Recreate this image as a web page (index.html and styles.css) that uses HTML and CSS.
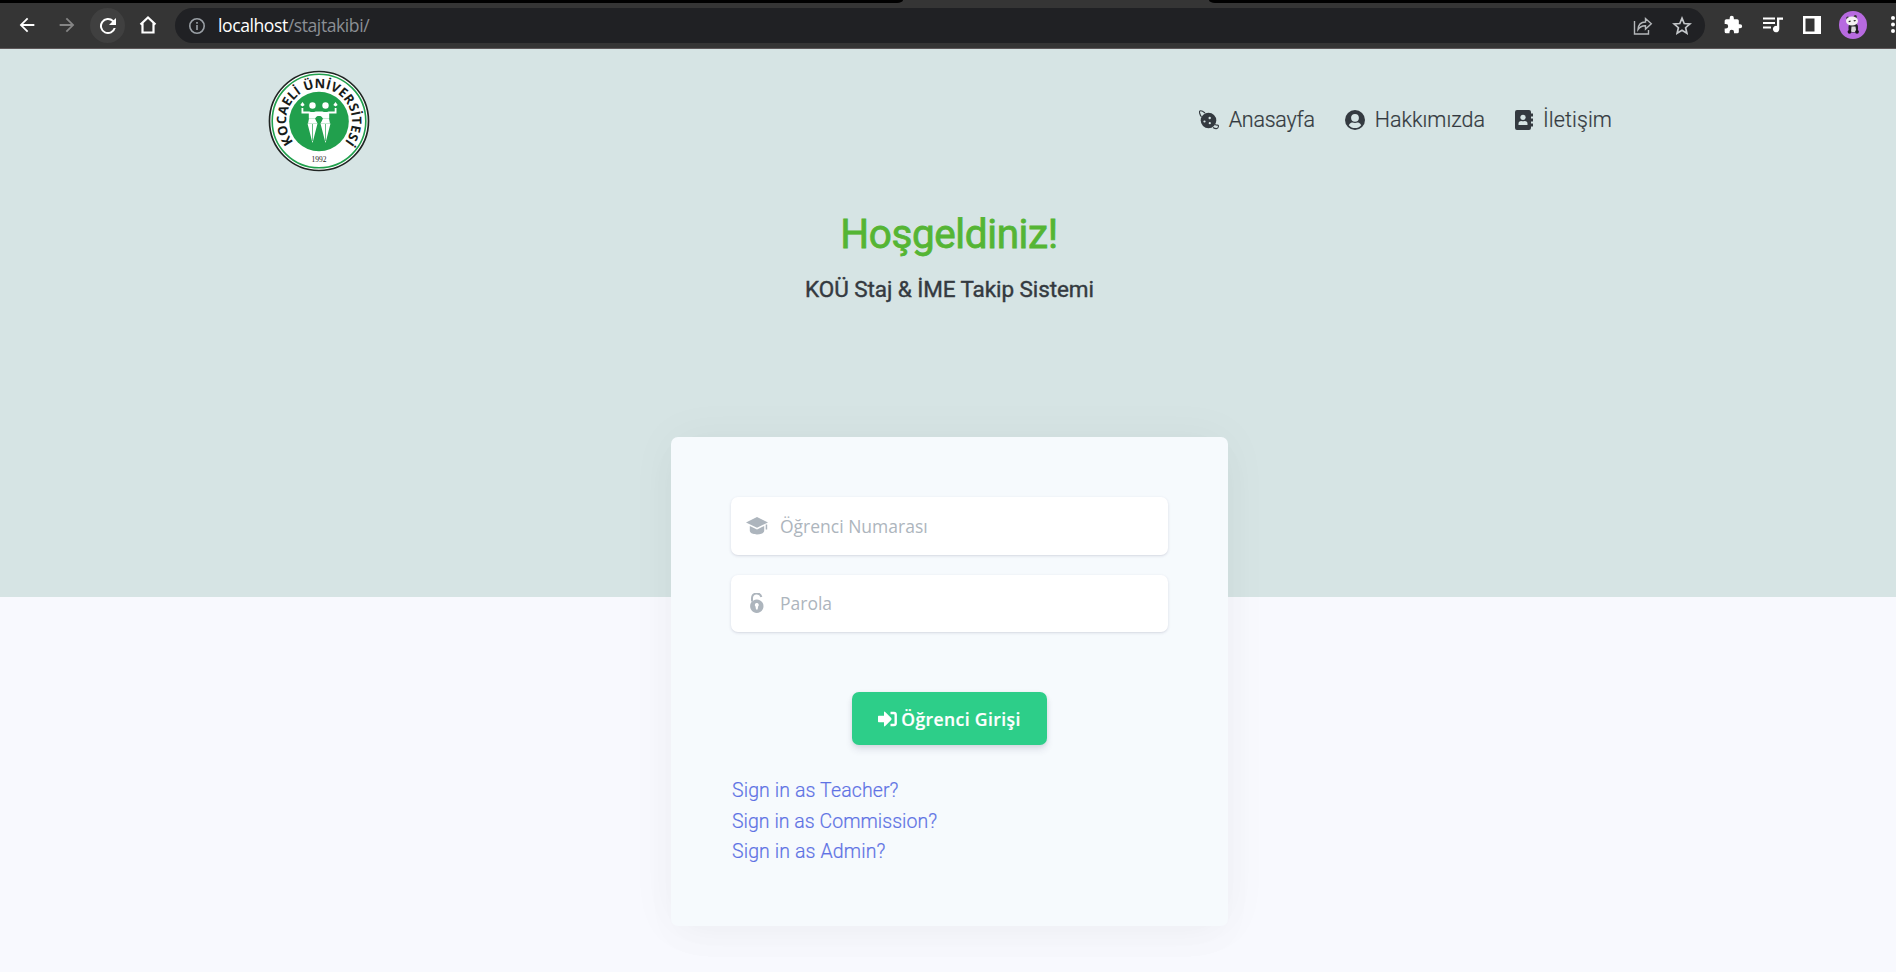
FILE: index.html
```html
<!DOCTYPE html>
<html lang="tr">
<head>
<meta charset="utf-8">
<title>Staj Takibi</title>
<link rel="stylesheet" href="styles.css">
</head>
<body>
<header class="browser">
  <div class="tabstrip"><i class="tab-left"></i><i class="tab-right"></i></div>
  <div class="toolbar">
    <svg class="tool back" viewBox="0 0 24 24"><path d="M20 11H7.8l5.6-5.6L12 4l-8 8 8 8 1.4-1.4L7.8 13H20z"/></svg>
    <svg class="tool forward" viewBox="0 0 24 24"><path d="M4 11h12.2l-5.6-5.6L12 4l8 8-8 8-1.4-1.4 5.6-5.6H4z"/></svg>
    <span class="reload"><svg class="tool" viewBox="0 0 24 24"><path d="M17.65 6.35A8 8 0 1 0 19.73 14h-2.08A6 6 0 1 1 16.2 7.8L13 11h7V4z"/></svg></span>
    <svg class="tool home" viewBox="0 0 24 24"><path d="M4.500 11.500 12 4.500l7.500 7M6.500 10v9.500h11V10" fill="none" stroke="#fff" stroke-width="2.200"/></svg>
    <div class="address">
      <svg class="info" viewBox="0 0 18 18"><circle cx="9" cy="9" r="7.200" fill="none" stroke="#9aa0a6" stroke-width="1.600"/><path d="M8.200 8h1.600v5H8.200zM8.200 5h1.600v1.700H8.200z" fill="#9aa0a6"/></svg>
      <span class="url"><b>localhost</b>/stajtakibi/</span>
      <svg class="share" viewBox="0 0 20 20" fill="none" stroke="#b5b8bb" stroke-width="1.400"><path d="M1.500 5v13h14v-4M5 13.500C5.300 8.500 8 6 12.500 6V2.500l5.800 5.300-5.800 5.300V9.700C9 9.500 7 10.500 5 13.500z"/></svg>
      <svg class="star" viewBox="0 0 20 20" fill="none" stroke="#c4c7ca" stroke-width="1.700"><path d="m10 2.200 2.200 5.300 5.700.5-4.300 3.700 1.300 5.600-4.900-3-4.900 3 1.300-5.600L2.100 8l5.700-.5z"/></svg>
    </div>
    <svg class="ext puzzle" viewBox="0 0 24 24"><path d="M20.500 11H19V7a2 2 0 0 0-2-2h-4V3.500a2.500 2.500 0 0 0-5 0V5H4a2 2 0 0 0-2 2v3.800h1.500a2.700 2.700 0 0 1 0 5.400H2V20a2 2 0 0 0 2 2h3.800v-1.500a2.700 2.700 0 0 1 5.400 0V22H17a2 2 0 0 0 2-2v-4h1.500a2.500 2.500 0 0 0 0-5z"/></svg>
    <svg class="ext music" viewBox="0 0 20 18"><path d="M0 1.500h12v2H0zM0 6h12v2H0zM0 10.500h8v2H0zM14 1.500h6v2.200h-3.700v9.300a3.200 3.200 0 1 1-2.300-3z"/></svg>
    <svg class="ext panel" viewBox="0 0 18 18"><path d="M0 0h18v18H0zM2.500 2.500v13h9v-13z" fill-rule="evenodd"/></svg>
    <svg class="avatar" viewBox="0 0 28 28"><circle cx="14" cy="14" r="14" fill="#b76ae0"/><rect x="9.500" y="12.500" width="9.500" height="9" rx="3.500" fill="#222226"/><path d="M12.500 15.500h4l.8 5.500h-5.300z" fill="#d9d7db"/><circle cx="8.800" cy="7" r="1.600" fill="#333"/><circle cx="16.300" cy="5.700" r="1.600" fill="#333"/><ellipse cx="13" cy="10" rx="6" ry="4.500" fill="#f4f1f2"/><path d="m9.500 10 2-.4.200 1.200-1.800.5zM14.500 9.300l2-.4.300 1.200-1.800.4z" fill="#222"/><circle cx="10.500" cy="20.800" r="1.900" fill="#161618"/><circle cx="18" cy="20.800" r="1.900" fill="#161618"/></svg>
    <svg class="more" viewBox="0 0 4 18"><circle cx="2" cy="2" r="2"/><circle cx="2" cy="8.500" r="2"/><circle cx="2" cy="15" r="2"/></svg>
  </div>
</header>
<main class="page">
  <section class="hero">
    <div class="navbar">
      <svg class="logo" viewBox="-51 -51 102 102">
        <circle r="49.500" fill="#fff" stroke="#202422" stroke-width="1.700"/>
        <circle r="46.800" fill="none" stroke="#21a04d" stroke-width="1.600"/>
        <circle cy=".5" r="29.800" fill="#21a04d"/>
        <path id="ring" d="M-25.600 21A33 33 0 1 1 26.400 20" fill="none"/>
        <text class="logo-name"><textPath href="#ring" textLength="148">KOCAELİ ÜNİVERSİTESİ</textPath></text>
        <text class="logo-year" y="40.500" text-anchor="middle" textLength="15">1992</text>
        <g fill="#fff">
          <circle cx="-6.500" cy="-15.500" r="3.200"/><circle cx="6.500" cy="-15.500" r="3.200"/>
          <path d="M-17.500-13h1.800v3.400h6q3.200 1.200 6.400 0h6.600q3.200 1.200 6.400 0h6V-13h1.800v5.500H10.200v5H4Q3-5 0-5T-4-2.500h-6.200v-5h-7.300z"/>
          <path d="M-11.500 2.500h10L-6.500 22zM1.500 2.500h10L6.500 22z"/>
          <path d="M-16.500-19l2.200 3-2.200 1.600-2.200-1.600zM16.500-19l2.200 3-2.200 1.600-2.200-1.600z"/>
          <path d="M-4-2.500h-6l-1 5h9.500zM4-2.500h6l1 5H1.500z"/>
        </g>
        <circle cy="-2" r="3" fill="#21a04d"/>
        <circle cy="-2.300" r="2.500" fill="#21a04d"/>
        <path d="M-6.500 3v17M6.500 3v17" stroke="#21a04d" stroke-width=".7"/>
      </svg>
      <nav class="menu">
        <a class="m1"><svg viewBox="0 0 20 20"><circle cx="9.500" cy="10.500" r="7.800"/><path d="M2.500 7C.8 4.500-.2 1.500 1 .9 2 .4 4.200 1.500 6 3M16 14.500c2.500 1.500 4-.5 3.300 2.500-.4 2.200-3 2-5.300.5" fill="none" stroke="#343a40" stroke-width="1.100"/><g fill="#d6e4e4"><circle cx="10.700" cy="8" r="1.200"/><circle cx="5.500" cy="11.500" r="1.100"/><circle cx="10.800" cy="13.200" r="1.100"/></g></svg><span>Anasayfa</span></a>
        <a class="m2"><svg viewBox="0 0 20 20"><circle cx="10" cy="10" r="10"/><circle cx="10" cy="7.800" r="3.900" fill="#d6e4e4"/><path d="M3.800 15.200C5 12.800 6.500 12.600 7.500 12.600q2.500.9 5 0c1 0 2.500.2 3.700 2.600C13 19 7 19 3.800 15.200z" fill="#d6e4e4"/></svg><span>Hakkımızda</span></a>
        <a class="m3"><svg viewBox="0 0 18 20"><path d="M2 0h12a2 2 0 0 1 2 2v16a2 2 0 0 1-2 2H2a2 2 0 0 1-2-2V2a2 2 0 0 1 2-2zM16 3.500h2v3h-2zM16 8.500h2v3h-2zM16 13.500h2v3h-2z"/><circle cx="8" cy="7.300" r="2.600" fill="#d6e4e4"/><path d="M3.500 15v-1.200q0-2.800 2.800-2.800q1.700.7 3.400 0q2.800 0 2.800 2.800V15z" fill="#d6e4e4"/></svg><span>İletişim</span></a>
      </nav>
    </div>
    <h1 class="welcome"><span>Hoşgeldiniz!</span></h1>
    <p class="subtitle"><span>KOÜ Staj &amp; İME Takip Sistemi</span></p>
  </section>
  <form class="card">
    <label class="field first"><svg viewBox="0 0 22 18"><path d="M11 0 22 5.400 11 10.800 0 5.400z"/><path d="M3.800 9 11 12.400 18.200 9v4.800c0 4.800-14.400 4.800-14.400 0zM19.700 7.500h1.500v5h-1.500z"/></svg><span>Öğrenci Numarası</span></label>
    <label class="field second"><svg viewBox="0 0 22 20"><path d="M6 8.500V5a4.800 4.800 0 0 1 9.400-1" fill="none" stroke="#adb5bd" stroke-width="2"/><path d="M10.800 6.500a6.700 6.700 0 1 0 .01 0z"/><path d="M10.800 10a2 2 0 0 1 1.300 3.500l-.5 3h-1.600l-.5-3A2 2 0 0 1 10.800 10z" fill="#fff"/></svg><span>Parola</span></label>
    <button class="submit" type="button"><svg viewBox="0 0 19 16"><path d="M0 5.500q0-.7.700-.7H6V1.500q0-1.500 1.200-.6l6 6.200q.8.900 0 1.800l-6 6.200Q6 16 6 14.500v-3.300H.7q-.7 0-.7-.7z"/><path d="M12.500 2H16q1.700 0 1.700 1.700v8.600Q17.700 14 16 14h-3.500" fill="none" stroke="#fff" stroke-width="2.400"/></svg><span>Öğrenci Girişi</span></button>
    <div class="links">
      <a class="l1">Sign in as Teacher?</a>
      <a class="l2">Sign in as Commission?</a>
      <a class="l3">Sign in as Admin?</a>
    </div>
  </form>
</main>
</body>
</html>
```

FILE: styles.css
```css
* { box-sizing: border-box; }
body { margin: 0; height: 972px; overflow: hidden; background: #f8f9fe; font-family: Roboto, "Open Sans", sans-serif; }
svg { display: block; flex: none; }
.browser { height: 49px; background: #353535; border-bottom: 1px solid #5d5759; overflow: hidden; }
.tabstrip { height: 3px; display: flex; justify-content: space-between; }
.tab-left { width: 903px; background: #000; border-bottom-right-radius: 6px 3px; }
.tab-right { width: 687px; background: #000; border-bottom-left-radius: 6px 3px; }
.toolbar { height: 45px; display: flex; align-items: center; padding-left: 16px; }
.tool { width: 24px; height: 24px; fill: #fff; margin-right: 14px; }
.back { width: 22px; margin-right: 18px; }
.forward { width: 22px; fill: #858585; margin-right: 12px; }
.reload { width: 35px; height: 35px; border-radius: 50%; background: #404040; display: flex; align-items: center; justify-content: center; margin-right: 11px; }
.reload .tool { margin: 0; }
.home { margin-right: 15px; }
.toolbar > .tool, .ext, .avatar, .more { margin-bottom: 1px; }
.address { width: 1530px; height: 35px; border-radius: 18px; background: #202124; display: flex; align-items: center; padding: 0 13px; flex: none; }
.info { width: 18px; height: 18px; margin-right: 12px; }
.url { font: 17.600px "Open Sans", sans-serif; letter-spacing: -.44px; color: #8b8f94; white-space: nowrap; flex: 1; padding-bottom: 1px; }
.url b { font-weight: 400; color: #fff; }
.share { width: 20px; height: 20px; margin-right: 19px; }
.star { width: 20px; height: 20px; }
.ext { fill: #fff; }
.puzzle { width: 20px; height: 20px; margin-left: 18px; margin-right: 20px; }
.music { width: 20px; height: 18px; margin-right: 20px; }
.panel { width: 18px; height: 18px; margin-right: 18px; }
.avatar { width: 28px; height: 28px; margin-right: 24px; }
.more { width: 4px; height: 18px; fill: #fff; }

.page { height: 923px; display: flex; flex-direction: column; align-items: center; }
.hero { width: 100%; height: 548px; background: #d6e4e4; flex: none; }
.navbar { display: flex; justify-content: space-between; padding: 21px 284px 0 268px; }
.logo { width: 102px; height: 102px; }
.logo-name { font: 700 13px "Open Sans", sans-serif; fill: #171b19; }
.logo-year { font: 7.500px "Liberation Serif", serif; fill: #222; }
.menu { display: flex; height: 102px; align-items: center; gap: 30px; padding-bottom: 3px; color: #343a40; font-size: 21.500px; font-weight: 300; -webkit-text-stroke: .2px #343a40; }
.menu a { display: flex; align-items: center; gap: 10px; white-space: nowrap; }
.menu svg { height: 20px; width: 20px; fill: #343a40; }
.menu .m3 svg { width: 18px; }
.menu .m1 { letter-spacing: -.25px; }
.menu .m2 { letter-spacing: 0; }
.menu .m3 { letter-spacing: .1px; }
.welcome { margin: 38px 0 0; text-align: center; line-height: 48px; font-size: 40.500px; font-weight: 400; letter-spacing: -.4px; -webkit-text-stroke: .8px #55b534; color: #55b534; padding-left: 2px; }
.subtitle { margin: 17px 0 0; text-align: center; line-height: 28px; font-size: 22.500px; font-weight: 400; letter-spacing: -.08px; -webkit-text-stroke: .4px #343a40; color: #343a40; padding-left: 3px; }
.card { position: relative; width: 557px; height: 489px; margin: -160px 0 0 3px; padding: 60px; border-radius: 7px; background: #f6fafd; box-shadow: 0 0 50px rgba(0,0,0,.04), 0 14px 40px rgba(40,40,60,.02); }
.field { display: flex; align-items: center; width: 437px; height: 58px; padding-left: 15px; gap: 13px; border-radius: 7px; background: #fff; box-shadow: 0 1px 3px rgba(50,50,93,.15), 0 1px 0 rgba(0,0,0,.02); color: #adb5bd; font: 17.500px "Open Sans", sans-serif; }
.field svg { width: 22px; height: 20px; fill: #adb5bd; margin-right: -1px; }
.second { height: 57px; margin-top: 20px; padding-bottom: 1px; }
.submit { display: flex; align-items: center; justify-content: center; gap: 4px; width: 195px; height: 53px; margin: 60px auto 0; border: 0; border-radius: 7px; background: #2dce89; color: #fff; font: 600 17.500px "Open Sans", sans-serif; letter-spacing: .4px; -webkit-text-stroke: .2px #fff; box-shadow: 0 5px 7px rgba(50,50,93,.11), 0 1px 4px rgba(0,0,0,.08); }
.submit svg { width: 19px; height: 16px; fill: #fff; }
.links { display: flex; flex-direction: column; align-items: flex-start; padding: 31px 0 0 1px; color: #5e72e4; font-size: 19.500px; line-height: 30.500px; letter-spacing: .12px; font-weight: 300; -webkit-text-stroke: .2px #5e72e4; white-space: nowrap; }
.l2 { letter-spacing: .03px; }
```
